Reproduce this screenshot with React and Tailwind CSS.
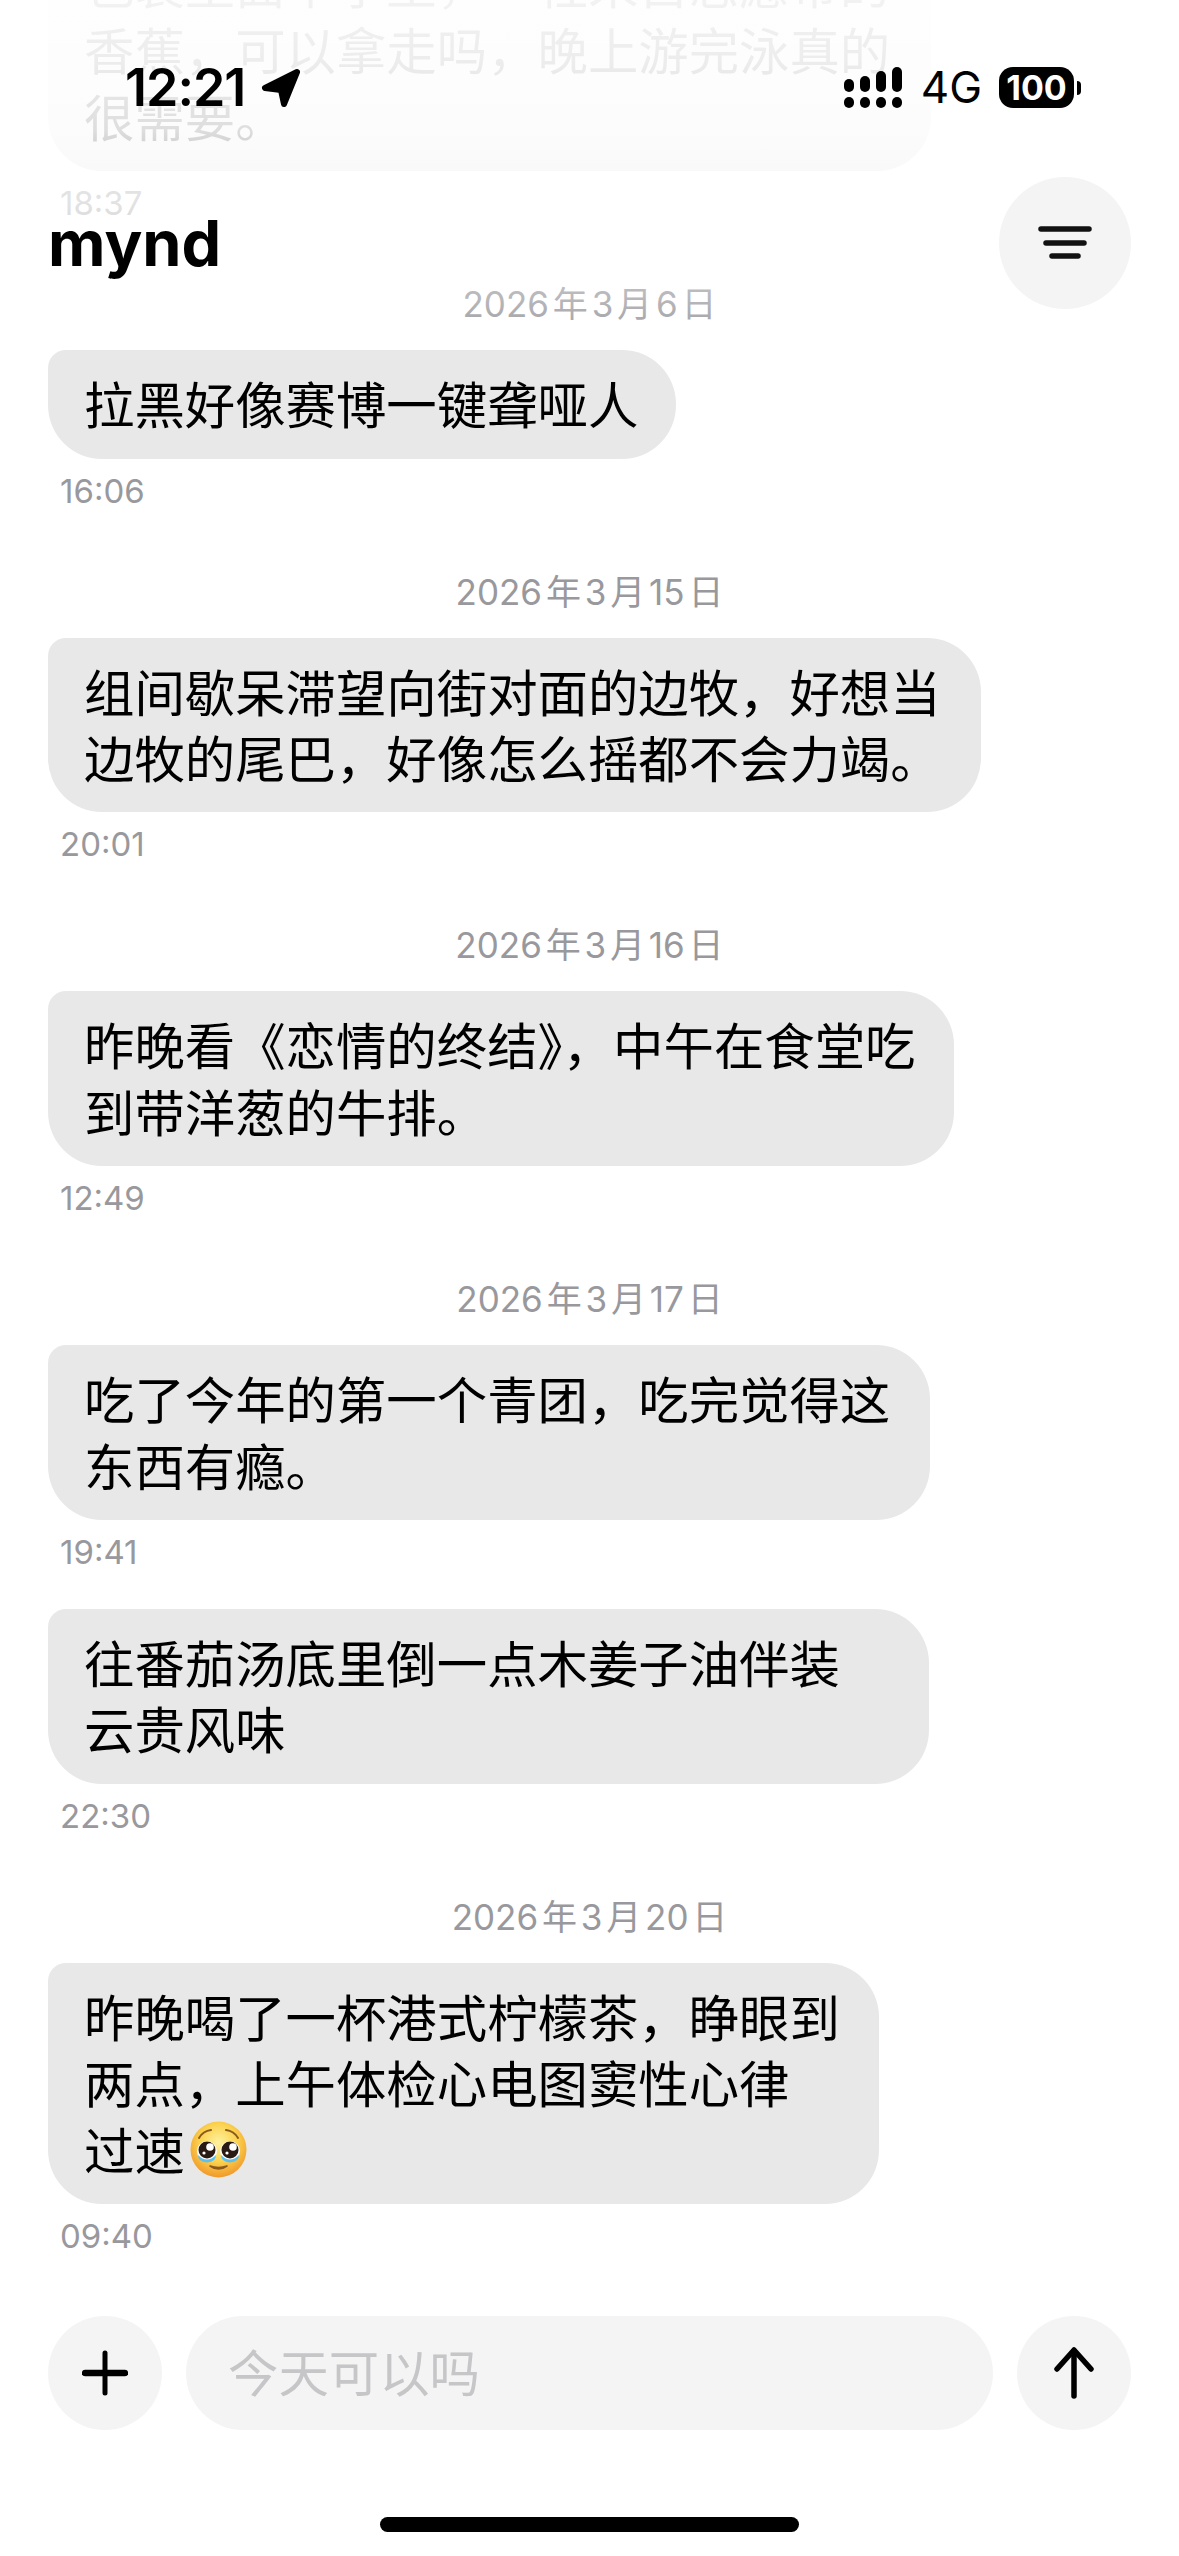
import React from "react";

const FONT = "font-['Inter','Noto_Sans_CJK_SC',sans-serif]";

// pleading face, no colour emoji font in the sandbox
function PleadingFace() {
  return (
    <svg viewBox="0 0 57 57" className="inline-block w-[57px] h-[57px] align-[-8px] ml-[5px]">
      <defs>
        <radialGradient id="face" cx="50%" cy="38%" r="62%">
          <stop offset="0%" stopColor="#fff2a0" />
          <stop offset="55%" stopColor="#fbd24e" />
          <stop offset="100%" stopColor="#f0982a" />
        </radialGradient>
      </defs>
      <circle cx="28.5" cy="28.5" r="28" fill="url(#face)" />
      <path d="M9 17 Q13 10 21 9" stroke="#8a5a1c" strokeWidth="2" fill="none" strokeLinecap="round" />
      <path d="M48 17 Q44 10 36 9" stroke="#8a5a1c" strokeWidth="2" fill="none" strokeLinecap="round" />
      <circle cx="17" cy="30" r="10" fill="#fff" />
      <circle cx="40" cy="30" r="10" fill="#fff" />
      <circle cx="17" cy="29" r="8.5" fill="#2a1a14" />
      <circle cx="40" cy="29" r="8.5" fill="#2a1a14" />
      <circle cx="20" cy="26" r="3.8" fill="#fff" />
      <circle cx="43" cy="26" r="3.8" fill="#fff" />
      <circle cx="14" cy="32" r="1.6" fill="#fff" />
      <circle cx="37" cy="32" r="1.6" fill="#fff" />
      <path d="M8 34 Q17 43 26 34 Q26 41 17 41.5 Q8 41 8 34Z" fill="#5cc0ee" />
      <path d="M31 34 Q40 43 49 34 Q49 41 40 41.5 Q31 41 31 34Z" fill="#5cc0ee" />
      <path d="M20 45 Q28.5 51 37 45 Q28.5 48 20 45Z" fill="#8a5a1c" stroke="#8a5a1c" strokeWidth="1.6" strokeLinejoin="round" />
    </svg>
  );
}

const groups = [
  {
    date: null,
    messages: [
      {
        lines: ["包装里面半字型，一柱来自志愿带的", "香蕉，可以拿走吗，晚上游完泳真的", "很需要。"],
        width: "w-[883px]",
        time: "18:37",
      },
    ],
  },
  {
    date: "2026 年 3 月 6 日",
    messages: [{ lines: ["拉黑好像赛博一键聋哑人"], width: "w-[628px]", time: "16:06" }],
  },
  {
    date: "2026 年 3 月 15 日",
    messages: [
      {
        lines: ["组间歇呆滞望向街对面的边牧，好想当", "边牧的尾巴，好像怎么摇都不会力竭。"],
        width: "w-[933px]",
        time: "20:01",
      },
    ],
  },
  {
    date: "2026 年 3 月 16 日",
    messages: [
      {
        lines: ["昨晚看《恋情的终结》，中午在食堂吃", "到带洋葱的牛排。"],
        width: "w-[906px]",
        time: "12:49",
      },
    ],
  },
  {
    date: "2026 年 3 月 17 日",
    messages: [
      {
        lines: ["吃了今年的第一个青团，吃完觉得这", "东西有瘾。"],
        width: "w-[882px]",
        time: "19:41",
      },
      {
        lines: ["往番茄汤底里倒一点木姜子油伴装", "云贵风味"],
        width: "w-[881px]",
        time: "22:30",
      },
    ],
  },
  {
    date: "2026 年 3 月 20 日",
    messages: [
      {
        lines: ["昨晚喝了一杯港式柠檬茶，睁眼到", "两点，上午体检心电图窦性心律", "过速"],
        width: "w-[831px]",
        time: "09:40",
        emoji: true,
      },
    ],
  },
];

function Message({ m }) {
  return (
    <div className="mb-[35px] last:mb-0">
      <div
        className={`${m.width} bg-[#e8e8e9] rounded-[54px] rounded-tl-[18px] pl-[36px] pr-[37px] pt-[23px] pb-[19px] text-[50.4px] leading-[66.4px] text-black whitespace-nowrap`}
      >
        {m.lines.map((l, i) => (
          <div key={i}>
            {l}
            {m.emoji && i === m.lines.length - 1 && <PleadingFace />}
          </div>
        ))}
      </div>
      <div className="mt-[10px] pl-[12px] h-[44px] leading-[44px] text-[33px] text-[#98989d]">{m.time}</div>
    </div>
  );
}

function StatusBar() {
  return (
    <div className="flex items-center justify-between h-[41px] pl-[125px] pr-[98px]">
      <div className="flex items-center gap-[16px]">
        <span className="text-[52px] leading-[41px] font-semibold text-black tracking-[-1px]">12:21</span>
        <svg viewBox="0 0 40 40" className="w-[40px] h-[40px]">
          <polygon points="36,4 4,20 20,22 23,36" fill="#000" stroke="#000" strokeWidth="6" strokeLinejoin="round" />
        </svg>
      </div>
      <div className="flex items-center">
        <svg viewBox="0 0 58 41" className="w-[58px] h-[41px] fill-black">
          <rect x="0" y="12" width="10" height="13" rx="5" />
          <rect x="16" y="9" width="10" height="16" rx="5" />
          <rect x="32" y="4" width="10" height="21" rx="5" />
          <rect x="48" y="0" width="10" height="25" rx="5" />
          <rect x="0" y="30" width="10" height="11" rx="5" />
          <rect x="16" y="30" width="10" height="11" rx="5" />
          <rect x="32" y="30" width="10" height="11" rx="5" />
          <rect x="48" y="30" width="10" height="11" rx="5" />
        </svg>
        <span className="ml-[19px] text-[44px] leading-[41px] text-black">4G</span>
        <div className="ml-[17px] w-[75px] h-[41px] rounded-[14px] bg-black flex items-center justify-center text-white text-[34px] leading-none font-bold">
          100
        </div>
        <div className="ml-[3px] w-[4px] h-[14px] rounded-r-full bg-black" />
      </div>
    </div>
  );
}

function Header() {
  return (
    <div className="absolute top-0 left-0 right-0 h-[345px] bg-[linear-gradient(to_bottom,rgba(255,255,255,0.95)_0px,rgba(255,255,255,0.93)_60px,rgba(255,255,255,0.87)_130px,rgba(255,255,255,0.74)_170px,rgba(255,255,255,0.72)_205px,rgba(255,255,255,0.3)_300px,rgba(255,255,255,0)_345px)]">
      <div className="pt-[67px]">
        <StatusBar />
      </div>
      <div className="flex items-center justify-between pl-[48px] pr-[48px] mt-[69px]">
        <h1 className="text-[63px] leading-[72px] font-bold text-black">mynd</h1>
        <button className="w-[132px] h-[132px] rounded-full bg-[#f4f4f4] flex items-center justify-center">
          <svg viewBox="0 0 54 34" className="w-[54px] h-[34px]" stroke="#111" strokeWidth="5.5" strokeLinecap="round">
            <line x1="3" y1="3" x2="51" y2="3" />
            <line x1="8" y1="17" x2="46" y2="17" />
            <line x1="14" y1="30" x2="40" y2="30" />
          </svg>
        </button>
      </div>
    </div>
  );
}

function Composer() {
  return (
    <div className="flex items-center gap-[24px] px-[48px]">
      <button className="w-[114px] h-[114px] shrink-0 rounded-full bg-[#f4f4f4] flex items-center justify-center">
        <svg viewBox="0 0 46 46" className="w-[46px] h-[46px]" stroke="#000" strokeLinecap="round">
          <line x1="23" y1="3" x2="23" y2="43" strokeWidth="5" />
          <line x1="3" y1="23" x2="43" y2="23" strokeWidth="6.5" />
        </svg>
      </button>
      <input
        className="flex-1 min-w-0 h-[114px] rounded-[57px] bg-[#f4f4f4] pl-[42px] pr-[43px] text-[50.4px] outline-none placeholder:text-[#c6c6c8]"
        placeholder="今天可以吗"
      />
      <button className="w-[114px] h-[114px] shrink-0 rounded-full bg-[#f4f4f4] flex items-center justify-center">
        <svg viewBox="0 0 44 52" className="w-[44px] h-[52px]" stroke="#000" strokeWidth="5.5" strokeLinecap="round" strokeLinejoin="round" fill="none">
          <line x1="22" y1="4" x2="22" y2="49" />
          <path d="M5 22 L22 3 L39 22" />
        </svg>
      </button>
    </div>
  );
}

export default function App() {
  return (
    <div className={`${FONT} relative flex flex-col w-full h-[2556px] overflow-hidden bg-white`}>
      {/* list is anchored to the composer, older messages run off the top */}
      <div className="flex-1 min-h-0 flex flex-col justify-end overflow-hidden pl-[48px] pb-[58px]">
        {groups.map((g, i) => (
          <div key={i} className="mt-[55px] first:mt-0 shrink-0">
            {g.date && (
              <div className="pr-[48px] mb-[22px] h-[48px] leading-[48px] text-center text-[35px] text-[#98989d] [word-spacing:-6px]">
                {g.date}
              </div>
            )}
            {g.messages.map((m, j) => (
              <Message key={j} m={m} />
            ))}
          </div>
        ))}
      </div>

      <Header />

      <Composer />

      <div className="mt-[87px] mb-[24px] flex justify-center">
        <div className="w-[419px] h-[15px] rounded-full bg-black" />
      </div>
    </div>
  );
}
